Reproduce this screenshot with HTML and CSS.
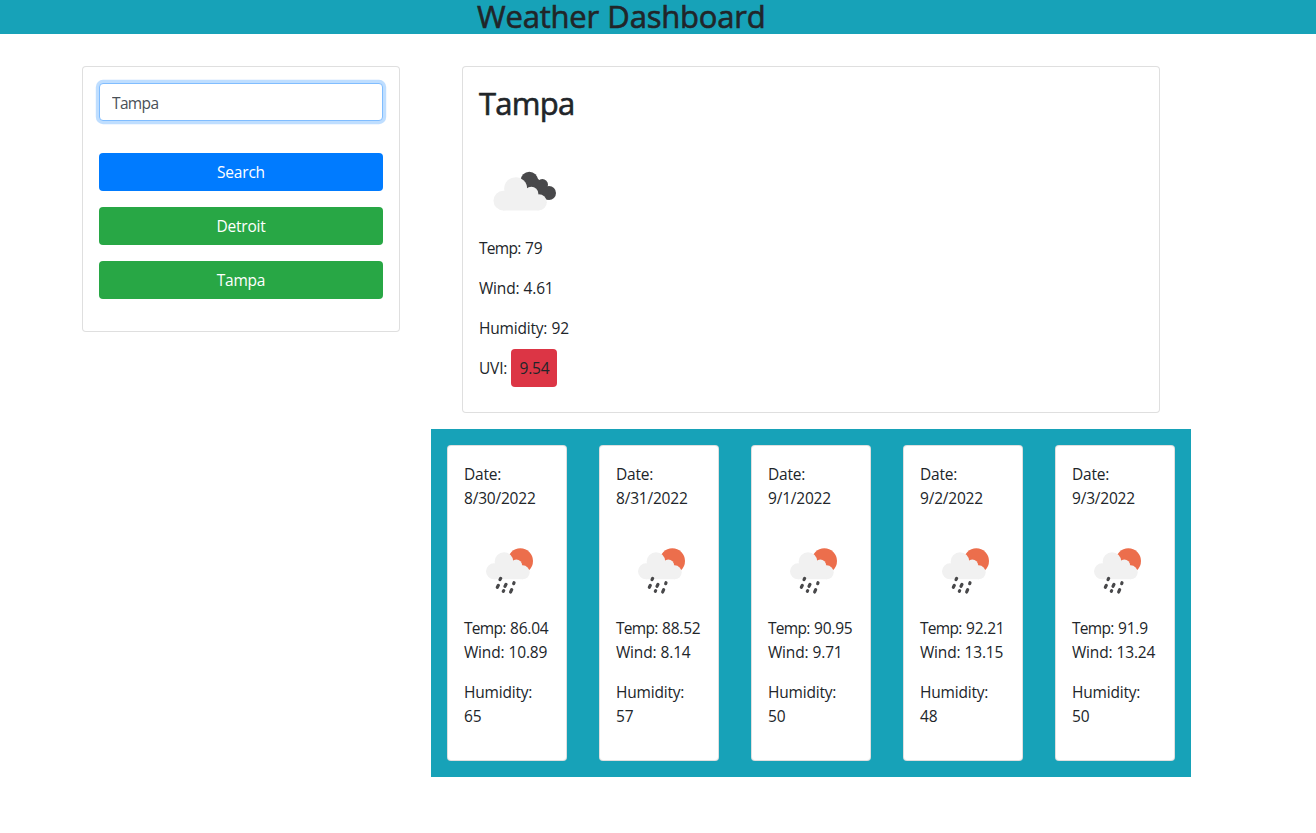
FILE: index.html
```html
<!DOCTYPE html>
<html lang="en">
<head>
<meta charset="utf-8">
<title>Weather Dashboard</title>
<link rel="stylesheet" href="styles.css">
</head>
<body>
<svg class="symbols" aria-hidden="true">
  <symbol id="clouds" viewBox="105 325 210 140">
    <g fill="#48484a"><circle cx="223" cy="362" r="26"/><circle cx="262" cy="375" r="17"/><circle cx="282" cy="400" r="21"/><path d="M205 350L240 350 280 385 278 420 225 400Z"/></g>
    <g fill="#f1f1f1"><circle cx="145" cy="423" r="29.500"/><circle cx="182" cy="387" r="34.500"/><circle cx="229" cy="402" r="21"/><circle cx="251" cy="428" r="24.500"/><path d="M145 405H229V415L251 428V452.500H145Z"/></g>
  </symbol>
  <symbol id="rain" viewBox="170 360 165 155">
    <circle cx="285" cy="408" r="38" fill="#ec6e4c"/>
    <g fill="#f1f1f1"><circle cx="206" cy="439" r="24"/><circle cx="236" cy="410" r="28"/><circle cx="273" cy="421" r="17.500"/><circle cx="292" cy="442" r="21"/><path d="M206 422H273L292 435V463H206Z"/></g>
    <path d="M226 460L224 464M219 481L216 487M242 478L239 484M266 473L265 476M235 497L234 499M259 494L256 501" stroke="#48484a" stroke-width="9.500" stroke-linecap="round"/>
  </symbol>
</svg>
<header class="banner"><h1>Weather Dashboard</h1></header>
<main class="layout">
  <aside class="card search">
    <input class="field" type="text" value="Tampa">
    <button class="btn primary">Search</button>
    <button class="btn success">Detroit</button>
    <button class="btn success">Tampa</button>
  </aside>
  <section class="results">
    <article class="card current">
      <h2>Tampa</h2>
      <div class="current-icon"><svg><use href="#clouds"/></svg></div>
      <p><span class="tight">Temp:</span> 79</p>
      <p>Wind: 4.61</p>
      <p>Humidity: 92</p>
      <p>UVI: <span class="uvi">9.54</span></p>
    </article>
    <div class="forecast">
      <article class="card day"><p>Date:<br>8/30/2022</p><div class="day-icon"><svg><use href="#rain"/></svg></div><p><span class="tight">Temp:</span> 86.04<br>Wind: 10.89</p><p>Humidity:<br>65</p></article>
      <article class="card day"><p>Date:<br>8/31/2022</p><div class="day-icon"><svg><use href="#rain"/></svg></div><p><span class="tight">Temp:</span> 88.52<br>Wind: 8.14</p><p>Humidity:<br>57</p></article>
      <article class="card day"><p>Date:<br>9/1/2022</p><div class="day-icon"><svg><use href="#rain"/></svg></div><p><span class="tight">Temp:</span> 90.95<br>Wind: 9.71</p><p>Humidity:<br>50</p></article>
      <article class="card day"><p>Date:<br>9/2/2022</p><div class="day-icon"><svg><use href="#rain"/></svg></div><p><span class="tight">Temp:</span> 92.21<br>Wind: 13.15</p><p>Humidity:<br>48</p></article>
      <article class="card day"><p>Date:<br>9/3/2022</p><div class="day-icon"><svg><use href="#rain"/></svg></div><p><span class="tight">Temp:</span> 91.9<br>Wind: 13.24</p><p>Humidity:<br>50</p></article>
    </div>
  </section>
</main>
</body>
</html>
```
FILE: styles.css
```css
* { box-sizing: border-box; }
body { margin: 0; background: #fff; color: #212529; font: 400 15.5px/24px "Open Sans", "Noto Sans", sans-serif; letter-spacing: -0.2px; word-spacing: 0.5px; }
h1, h2, p { margin: 0; }
h1, h2 { font-weight: 400; font-size: 31px; letter-spacing: -0.2px; -webkit-text-stroke: 0.6px #212529; }
.symbols { display: none; }
.banner { height: 34px; background: #17a2b8; padding-left: 477px; }
.banner h1 { line-height: 32px; white-space: nowrap; }
.layout { display: flex; align-items: flex-start; gap: 31px; padding: 32px 0 0 82px; }
.card { background: #fff; border: 1px solid rgba(0, 0, 0, 0.125); border-radius: 4px; padding: 16px; }
.search { width: 318px; height: 266px; display: flex; flex-direction: column; gap: 16px; }
.field { height: 38px; width: 100%; flex: none; margin-bottom: 16px; padding: 8px 12px 6px; border: 1px solid #80bdff; border-radius: 4px; box-shadow: 0 0 0 3.2px rgba(0, 123, 255, 0.25); color: #495057; font: inherit; letter-spacing: -0.65px; outline: 0; }
.btn { height: 38px; flex: none; border: 0; border-radius: 4px; padding: 0; color: #fff; font: inherit; letter-spacing: inherit; }
.primary { background: #007bff; }
.success { background: #28a745; }
.results { width: 760px; }
.current { width: 698px; height: 347px; margin: 0 0 16px 31px; }
.current h2 { line-height: 40px; letter-spacing: -0.75px; }
.current p { margin-bottom: 16px; white-space: nowrap; }
.current-icon { height: 113px; padding: 45px 0 0 11px; }
.current-icon svg { display: block; width: 70px; height: 46.67px; }
.tight { letter-spacing: -0.7px; }
.uvi { background: #dc3545; border-radius: 4px; padding: 8px; }
.forecast { height: 348px; display: flex; gap: 32px; padding: 16px; background: #17a2b8; }
.day { width: 120px; height: 316px; white-space: nowrap; }
.day p + p { margin-top: 16px; }
.day-icon { height: 106px; padding: 35px 0 0 18px; }
.day-icon svg { display: block; width: 55px; height: 51.67px; }
```
